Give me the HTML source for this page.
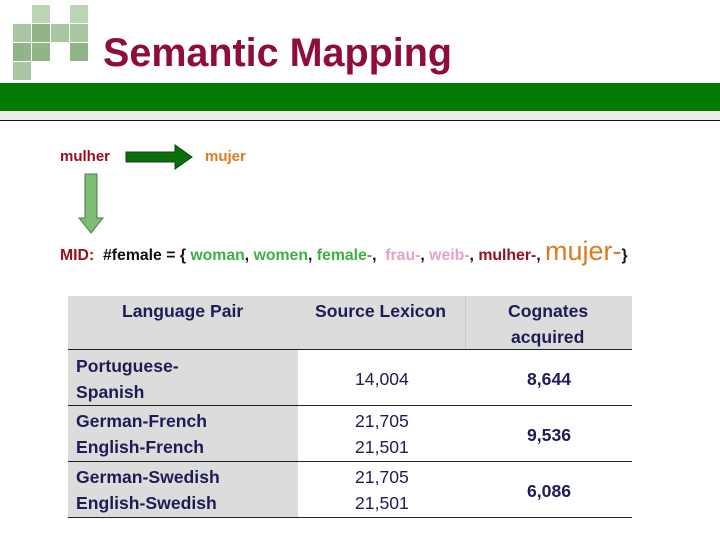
<!DOCTYPE html>
<html><head><meta charset="utf-8"><style>
body{margin:0;width:720px;height:540px;background:#fff;position:relative;overflow:hidden;font-family:"Liberation Sans",Arial,sans-serif}
.sq{position:absolute;width:18px;height:18px;background:#a9c7a2}
.a{position:absolute;white-space:nowrap}
.t{position:absolute;color:#1d1d55;font-size:17.6px;white-space:nowrap;font-weight:bold}
.n{position:absolute;color:#1d1d55;font-size:17.6px;white-space:nowrap}
.hl{position:absolute;left:68px;width:564px;height:1px;background:#222}
</style></head><body>
<div class="sq" style="left:32px;top:5px;background:#bcd5b4"></div>
<div class="sq" style="left:70px;top:5px;background:#bcd5b4"></div>
<div class="sq" style="left:13px;top:24px"></div>
<div class="sq" style="left:32px;top:24px;background:#8fb588"></div>
<div class="sq" style="left:51px;top:24px"></div>
<div class="sq" style="left:70px;top:24px"></div>
<div class="sq" style="left:13px;top:43px;background:#8fb588"></div>
<div class="sq" style="left:32px;top:43px;background:#8fb588"></div>
<div class="sq" style="left:70px;top:43px;background:#8fb588"></div>
<div class="sq" style="left:13px;top:62px"></div>
<div class="a" style="left:103px;top:31px;font-size:39.5px;font-weight:bold;color:#8e0d3c">Semantic Mapping</div>
<div style="position:absolute;left:0;top:83px;width:720px;height:28px;background:#027b02"></div>
<div style="position:absolute;left:0;top:111px;width:720px;height:9px;background:#ececec"></div>
<div style="position:absolute;left:0;top:120px;width:720px;height:1px;background:#111"></div>
<div class="a" style="left:60px;top:148px;font-size:15px;font-weight:bold;color:#9b1020">mulher</div>
<div class="a" style="left:205px;top:148px;font-size:15px;font-weight:bold;color:#e07a20">mujer</div>
<svg style="position:absolute;left:0;top:0" width="720" height="540">
<polygon points="126,152 175,152 175,145 192,157 175,169 175,162 126,162" fill="#0b6d0b" stroke="#084a08"/>
<polygon points="85,174 97,174 97,218 103,218 91,233 79,218 85,218" fill="#7dbd76" stroke="#4a7a4a"/>
</svg>
<div class="a" style="left:60px;top:236px;font-size:15.8px;font-weight:bold;color:#111"><span style="color:#9b1020">MID:</span>&nbsp; #female = { <span style="color:#3cb043">woman</span>, <span style="color:#3cb043">women</span>, <span style="color:#3cb043">female-</span>,&nbsp; <span style="color:#e8a0c8">frau-</span>, <span style="color:#e8a0c8">weib-</span>, <span style="color:#9b1020">mulher-</span>, <span style="color:#e07a20;font-size:27px;font-weight:normal">mujer-</span>}</div>
<div style="position:absolute;left:68px;top:296px;width:564px;height:53px;background:#dcdcdc"></div>
<div style="position:absolute;left:465px;top:296px;width:1px;height:53px;background:#c8c8c8"></div>
<div style="position:absolute;left:68px;top:349px;width:230px;height:168px;background:#dcdcdc"></div>
<div class="hl" style="top:349px"></div>
<div class="hl" style="top:405px"></div>
<div class="hl" style="top:461px"></div>
<div class="hl" style="top:517px"></div>
<div class="t" style="left:122px;top:301px">Language Pair</div>
<div class="t" style="left:315px;top:301px">Source Lexicon</div>
<div class="t" style="left:508px;top:301px">Cognates</div>
<div class="t" style="left:511px;top:327px">acquired</div>
<div class="t" style="left:76px;top:356px">Portuguese-</div>
<div class="t" style="left:76px;top:382px">Spanish</div>
<div class="n" style="left:355px;top:369px">14,004</div>
<div class="t" style="left:527px;top:369px">8,644</div>
<div class="t" style="left:76px;top:411px">German-French</div>
<div class="t" style="left:76px;top:437px">English-French</div>
<div class="n" style="left:355px;top:411px">21,705</div>
<div class="n" style="left:355px;top:437px">21,501</div>
<div class="t" style="left:527px;top:425px">9,536</div>
<div class="t" style="left:76px;top:467px">German-Swedish</div>
<div class="t" style="left:76px;top:493px">English-Swedish</div>
<div class="n" style="left:355px;top:467px">21,705</div>
<div class="n" style="left:355px;top:493px">21,501</div>
<div class="t" style="left:527px;top:481px">6,086</div>
</body></html>
